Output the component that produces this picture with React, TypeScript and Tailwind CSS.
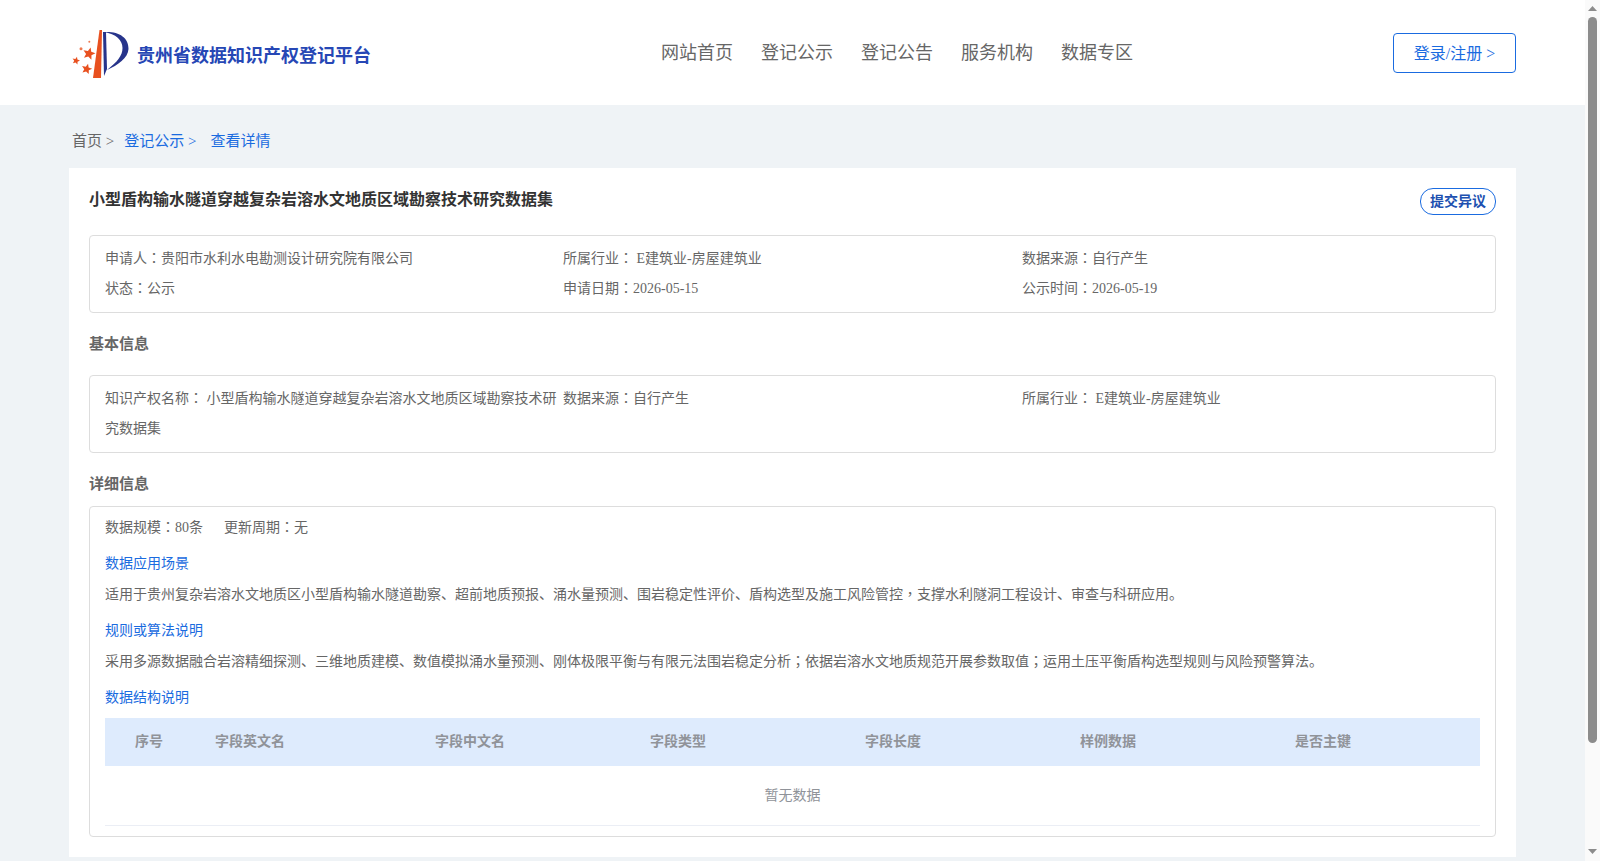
const navItems = ["网站首页", "登记公示", "登记公告", "服务机构", "数据专区"];
const columns = [
  { label: "序号", width: "w-[110px]", pad: "pl-[30px]" },
  { label: "字段英文名", width: "w-[220px]", pad: "" },
  { label: "字段中文名", width: "w-[215px]", pad: "" },
  { label: "字段类型", width: "w-[215px]", pad: "" },
  { label: "字段长度", width: "w-[215px]", pad: "" },
  { label: "样例数据", width: "w-[215px]", pad: "" },
  { label: "是否主键", width: "flex-1", pad: "" },
];

function starPoints(cx: number, cy: number, r: number) {
  const pts: string[] = [];
  for (let i = 0; i < 10; i++) {
    const radius = i % 2 === 0 ? r : r * 0.45;
    const angle = -Math.PI / 2 + 0.25 + (i * Math.PI) / 5;
    pts.push(`${cx + radius * Math.cos(angle)},${cy + radius * Math.sin(angle)}`);
  }
  return pts.join(" ");
}

function Logo() {
  return (
    <svg width="60" height="52" viewBox="0 0 60 52" className="shrink-0">
      <path d="M29.5 3 L32 3 L31 51 L23 51 Z" fill="#e8501f" />
      <path d="M33 5 L36 5 L37 42 L34 49 Z" fill="#27348b" />
      <path d="M34 5 C48 4 59 10 58.5 22 C58 31 48 38 37 43 C47 35 52.5 29 52.5 21 C52.5 13 46 7 34 5 Z" fill="#27348b" />
      <polygon points={starPoints(19, 26.7, 6.5)} fill="#e8501f" />
      <polygon points={starPoints(6, 33.7, 4)} fill="#e8501f" />
      <polygon points={starPoints(16.7, 42, 5.5)} fill="#e8501f" />
      <circle cx="11" cy="21.7" r="1.5" fill="#ee7a52" />
      <circle cx="19.3" cy="14.7" r="1" fill="#ee7a52" />
    </svg>
  );
}

// colons, semicolons and commas sit centred in the reference, SC puts them bottom-left
function Zh({ text }: { text: string }) {
  return (
    <>
      {text.split(/([：；，])/).map((part, i) =>
        i % 2 === 1 ? (
          <span key={i} className="font-['Noto_Sans_CJK_TC',serif] leading-[0]">
            {part}
          </span>
        ) : (
          part
        )
      )}
    </>
  );
}

function Field({ text }: { text: string }) {
  return (
    <div className="text-sm leading-[30px] text-[#666]">
      <Zh text={text} />
    </div>
  );
}

function Scrollbar() {
  return (
    <aside className="flex h-[861px] w-[15px] shrink-0 flex-col items-center bg-[#fafafa]">
      <svg width="9" height="5" viewBox="0 0 9 5" className="mt-[6px] shrink-0">
        <path d="M4.5 0 L9 5 L0 5 Z" fill="#8c8c8c" />
      </svg>
      <div className="mt-[6px] h-[726px] w-[9px] rounded-[5px] bg-[#8c8c8c]" />
      <svg width="9" height="5" viewBox="0 0 9 5" className="mt-auto mb-[7px] shrink-0">
        <path d="M0 0 L9 0 L4.5 5 Z" fill="#8c8c8c" />
      </svg>
    </aside>
  );
}

export default function App() {
  return (
    <div className="flex h-[861px] overflow-hidden bg-[#eff3f6] font-['Liberation_Serif','Noto_Sans_CJK_SC',serif]">
      <div className="min-w-0 flex-1">
        <header className="flex h-[105px] items-center bg-white pl-[70px] pr-[69px]">
          <div className="flex w-[591px] items-center gap-[7px]">
            <Logo />
            <span className="mt-[7px] text-lg font-bold text-[#2647b5]">贵州省数据知识产权登记平台</span>
          </div>
          <nav className="flex gap-[28px] text-lg text-[#666]">
            {navItems.map((item) => (
              <a key={item}>{item}</a>
            ))}
          </nav>
          <button className="ml-auto h-[40px] w-[123px] rounded border border-[#1a6be0] pt-[3px] text-base text-[#1a6be0]">
            登录/注册 &gt;
          </button>
        </header>

        <main className="mx-auto w-[1447px] pt-[21px]">
          <div className="flex h-[42px] items-start text-[15px] leading-[30px] text-[#666]">
            <span className="ml-[3px]">首页 &gt;</span>
            <span className="ml-[10px] text-[#1a6be0]">登记公示 &gt;</span>
            <span className="ml-[14px] text-[#1a6be0]">查看详情</span>
          </div>
          <section className="h-[689px] bg-white px-[20px] pt-[20px]">
            <div className="flex items-start justify-between">
              <h1 className="text-base font-bold leading-[24px] text-[#333]">
                小型盾构输水隧道穿越复杂岩溶水文地质区域勘察技术研究数据集
              </h1>
              <button className="h-[27px] w-[76px] rounded-[13px] border border-[#1a6be0] text-sm font-bold text-[#2050b0]">
                提交异议
              </button>
            </div>

            <div className="mt-[20px] grid grid-cols-[458px_459px_1fr] rounded border border-[#ddd] px-[15px] py-2">
              <Field text="申请人：贵阳市水利水电勘测设计研究院有限公司" />
              <Field text="所属行业： E建筑业-房屋建筑业" />
              <Field text="数据来源：自行产生" />
              <Field text="状态：公示" />
              <Field text="申请日期：2026-05-15" />
              <Field text="公示时间：2026-05-19" />
            </div>

            <h2 className="mt-[19px] text-[15px] font-bold leading-[24px] text-[#666]">基本信息</h2>

            <div className="mt-[19px] grid grid-cols-[458px_459px_1fr] rounded border border-[#ddd] px-[15px] py-2">
              <Field text="知识产权名称： 小型盾构输水隧道穿越复杂岩溶水文地质区域勘察技术研究数据集" />
              <Field text="数据来源：自行产生" />
              <Field text="所属行业： E建筑业-房屋建筑业" />
            </div>

            <h2 className="mt-[19px] text-[15px] font-bold leading-[24px] text-[#666]">详细信息</h2>

            <div className="mt-[10px] rounded border border-[#ddd] px-[15px] pb-[10px] pt-[6px]">
              <div className="flex gap-[21px] text-sm leading-[30px] text-[#666]">
                <span><Zh text="数据规模：80条" /></span>
                <span><Zh text="更新周期：无" /></span>
              </div>
              <p className="mt-[6px] text-sm leading-[30px] text-[#1a6be0]">数据应用场景</p>
              <p className="mt-px text-sm leading-[30px] text-[#666]">
                <Zh text="适用于贵州复杂岩溶水文地质区小型盾构输水隧道勘察、超前地质预报、涌水量预测、围岩稳定性评价、盾构选型及施工风险管控，支撑水利隧洞工程设计、审查与科研应用。" />
              </p>
              <p className="mt-[6px] text-sm leading-[30px] text-[#1a6be0]">规则或算法说明</p>
              <p className="mt-px text-sm leading-[30px] text-[#666]">
                <Zh text="采用多源数据融合岩溶精细探测、三维地质建模、数值模拟涌水量预测、刚体极限平衡与有限元法围岩稳定分析；依据岩溶水文地质规范开展参数取值；运用土压平衡盾构选型规则与风险预警算法。" />
              </p>
              <p className="mt-[6px] text-sm leading-[30px] text-[#1a6be0]">数据结构说明</p>
              <div className="mt-[5px] flex h-[48px] items-center bg-[#deebfd] text-sm font-bold text-[#909399]">
                {columns.map((col) => (
                  <div key={col.label} className={`${col.width} ${col.pad}`}>
                    {col.label}
                  </div>
                ))}
              </div>
              <div className="flex h-[60px] items-center justify-center border-b border-[#ebeef5] text-sm text-[#909399]">
                暂无数据
              </div>
            </div>
          </section>
        </main>
      </div>
      <Scrollbar />
    </div>
  );
}
